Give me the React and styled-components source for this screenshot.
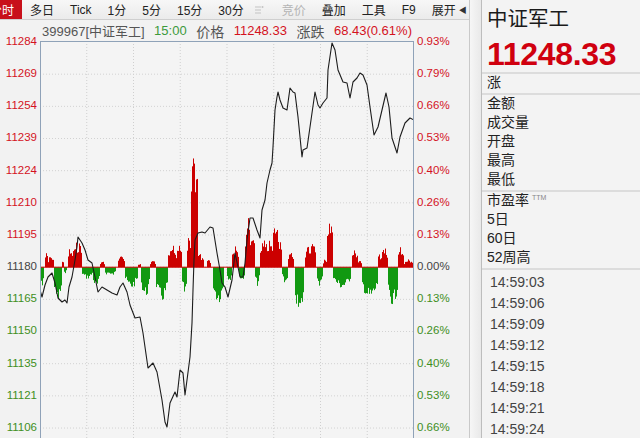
import React from 'react'
import styled, { createGlobalStyle } from 'styled-components'

const GlobalStyle = createGlobalStyle`
  html, body {
    margin: 0;
    padding: 0;
    background: #f2f2f2;
  }
  body {
    font-family: 'Liberation Sans', 'Noto Sans CJK SC', sans-serif;
  }
`

const RED = '#d4121e'
const GREEN = '#3f8f22'
const BAR_RED = '#cc0000'
const BAR_GREEN = '#119911'

// plot geometry, in page pixels
const PLOT_LEFT = 40
const PLOT_TOP = 41
const PLOT_RIGHT = 414
const ROW = 32.17
const BASE_Y = 42 + ROW * 7

const leftLabels = [
  '11284', '11269', '11254', '11239', '11224', '11210', '11195',
  '11180', '11165', '11150', '11135', '11121', '11106'
]
const rightLabels = [
  '0.93%', '0.79%', '0.66%', '0.53%', '0.40%', '0.26%', '0.13%',
  '0.00%', '0.13%', '0.26%', '0.40%', '0.53%', '0.66%'
]

const tabs = ['多日', 'Tick', '1分', '5分', '15分', '30分']
const times = ['14:59:03', '14:59:06', '14:59:09', '14:59:12', '14:59:15', '14:59:18', '14:59:21', '14:59:24']

// traced price line
const linePoints = [
  [40, 290], [42, 297], [45, 285], [48, 277], [52, 273], [55, 283], [58, 298],
  [62, 302], [65, 300], [67, 303], [69, 287], [72, 277], [75, 260], [77, 247],
  [78, 237], [82, 243], [85, 250], [88, 260], [92, 263], [95, 277], [98, 292],
  [102, 287], [107, 290], [112, 293], [117, 295], [120, 287], [123, 283],
  [127, 292], [130, 305], [135, 318], [140, 317], [143, 333], [148, 368],
  [153, 363], [157, 372], [162, 400], [165, 422], [167, 427], [170, 403],
  [175, 392], [177, 397], [180, 370], [183, 373], [185, 395], [187, 380],
  [190, 357], [192, 323], [193, 290], [194, 260], [195, 240], [198, 233],
  [202, 232], [205, 233], [210, 227], [213, 228], [217, 253], [220, 270],
  [222, 283], [225, 287], [228, 297], [232, 280], [235, 253], [238, 267],
  [240, 277], [243, 277], [245, 263], [247, 240], [250, 218], [253, 218],
  [257, 230], [260, 238], [262, 210], [265, 200], [267, 183], [270, 170],
  [272, 163], [273, 147], [275, 110], [277, 97], [278, 92], [280, 100],
  [283, 108], [287, 110], [290, 88], [293, 92], [295, 93], [298, 117],
  [302, 157], [303, 150], [307, 148], [310, 127], [315, 92], [318, 105],
  [320, 108], [323, 103], [327, 98], [328, 70], [332, 43], [335, 50],
  [338, 70], [343, 82], [347, 83], [350, 98], [353, 82], [357, 78],
  [360, 73], [363, 75], [367, 85], [370, 107], [374, 135], [378, 127],
  [382, 110], [386, 93], [389, 107], [392, 138], [397, 153], [400, 137],
  [405, 123], [410, 118], [414, 120]
]

// volume segments: [from x, to x, height] (+ red above, - green below)
const segments = [
  [41, 43, -22], [45, 47, 18], [48, 53, 12], [54, 61, -36], [62, 63, 8],
  [64, 66, -6], [68, 72, 20], [73, 77, 27], [78, 81, 30], [82, 92, -12],
  [93, 99, -22], [100, 104, 6], [105, 107, -9], [108, 115, -9], [118, 124, 11],
  [125, 137, -22], [138, 140, 4], [141, 149, -31], [150, 155, 7],
  [156, 167, -35], [168, 176, 24], [177, 181, 28], [182, 186, -27],
  [187, 190, 31], [191, 195, 114], [196, 197, 92], [198, 200, 20],
  [201, 203, 12], [207, 210, 9], [213, 223, -36], [227, 231, -14],
  [232, 238, 21], [239, 244, -14], [245, 250, 50], [251, 254, 41],
  [255, 259, -19], [260, 267, 30], [268, 272, 31], [273, 278, 54],
  [279, 281, 31], [282, 287, -17], [288, 293, 19], [295, 303, -50],
  [305, 310, 21], [311, 315, 33], [317, 322, -19], [323, 326, 8],
  [327, 332, 53], [333, 350, -22], [352, 357, 18], [358, 361, 9],
  [362, 377, -34], [378, 380, 16], [381, 387, 23], [388, 397, -39],
  [398, 403, 21], [404, 412, 8]
]

const buildBars = () => {
  let seed = 7
  const rand = () => {
    seed = (seed * 9301 + 49297) % 233280
    return seed / 233280
  }
  const bars = []
  segments.forEach(([x0, x1, h]) => {
    const n = x1 - x0 + 1
    for (let x = x0; x <= x1; x++) {
      const t = (x - x0 + 0.5) / n
      const shape = n > 2 ? 0.55 + 0.45 * Math.sin(Math.PI * t) : 1
      const k = Math.abs(h) > 80 ? 0.95 + 0.05 * rand() : 0.6 + 0.4 * rand()
      const len = Math.max(2, Math.abs(h) * shape * k)
      bars.push({ x, len, up: h > 0 })
    }
  })
  return bars
}

const bars = buildBars()

const Screen = styled.div`
  width: 640px;
  height: 438px;
  overflow: hidden;
  display: flex;
  background: #f2f2f2;
  color: #222;
`

const LeftPane = styled.div`
  width: 470px;
  flex-shrink: 0;
  display: flex;
  flex-direction: column;
  border-right: 1px solid #c9c9c9;
  box-sizing: border-box;
`

const TabBar = styled.div`
  height: 20px;
  flex-shrink: 0;
  display: flex;
  align-items: center;
  background: linear-gradient(#f7f7f7, #ebebeb);
  border-bottom: 1px solid #cfcfcf;
  box-sizing: border-box;
  font-size: 12px;
  overflow: hidden;
  white-space: nowrap;
`

const Tab = styled.div`
  height: 100%;
  display: flex;
  align-items: center;
  flex-shrink: 0;
  padding: ${(p) => (p.$active ? '0 8px 0 2px' : '0 8px')};
  margin-left: ${(p) => (p.$active ? '-12px' : '0')};
  background: ${(p) => (p.$active ? '#c8101a' : 'transparent')};
  color: ${(p) => (p.$active ? '#fff' : p.$muted ? '#b4b4b4' : '#222')};
`

const ToolIcon = styled.svg`
  width: 10px;
  height: 10px;
  flex-shrink: 0;
  margin: 0 10px 0 2px;
`

const Arrow = styled.span`
  font-size: 8px;
  color: #333;
  margin-left: -5px;
`

const ChartGrid = styled.div`
  flex: 1;
  min-height: 0;
  display: grid;
  grid-template-columns: 40px 374px 55px;
  grid-template-rows: 21px 1fr;
`

const Axis = styled.div`
  grid-row: 1 / span 2;
  grid-column: ${(p) => (p.$side === 'left' ? 1 : 3)};
  display: flex;
  flex-direction: column;
  padding-top: 5px;
  align-items: ${(p) => (p.$side === 'left' ? 'flex-end' : 'flex-start')};
  padding-right: ${(p) => (p.$side === 'left' ? '3px' : '0')};
  padding-left: ${(p) => (p.$side === 'right' ? '3px' : '0')};
  font-size: 11.5px;
`

const AxisLabel = styled.div`
  height: ${ROW}px;
  line-height: ${ROW}px;
  flex-shrink: 0;
  color: ${(p) => (p.$tone === 'up' ? RED : p.$tone === 'down' ? GREEN : '#444')};
`

const Header = styled.div`
  grid-row: 1;
  grid-column: 2;
  display: flex;
  align-items: center;
  gap: 9.5px;
  padding-left: 2px;
  font-size: 13px;
  white-space: nowrap;
  color: #555;
`

const HeadText = styled.span`
  color: ${(p) => p.$color || '#555'};
  font-size: ${(p) => (p.$cjk ? '14px' : '13px')};
`

const Plot = styled.div`
  grid-row: 2;
  grid-column: 2;
  border: 1px solid #8fa2b8;
  border-bottom: none;
  background: #f4f4f4;
  overflow: hidden;
`

const Gutter = styled.div`
  width: 11px;
  flex-shrink: 0;
  background: linear-gradient(90deg, #f6f6f6, #e9e9e9);
  border-right: 1px solid #bdbdbd;
`

const RightPanel = styled.div`
  flex: 1;
  display: flex;
  flex-direction: column;
  background: #f3f3f3;
  padding-left: 5px;
`

const Name = styled.div`
  height: 36px;
  line-height: 36px;
  font-size: 20.5px;
  color: #1a1a1a;
  padding-top: 1px;
  box-sizing: border-box;
`

const Price = styled.div`
  height: 36px;
  line-height: 36px;
  font-size: 32px;
  font-weight: bold;
  color: #d0000f;
  letter-spacing: -0.3px;
`

const Section = styled.div`
  border-top: 2px solid #dcdcdc;
  margin-left: -5px;
  padding-left: 5px;
`

const InfoRow = styled.div`
  height: 19px;
  line-height: 17px;
  font-size: 14px;
  color: #222;
`

const Ttm = styled.sup`
  font-size: 7px;
  line-height: 0;
  color: #888;
  margin-left: 3px;
  vertical-align: 5px;
`

const TimeList = styled.div`
  border-top: 2px solid #dcdcdc;
  margin-left: -5px;
  padding: 1.5px 0 0 8px;
`

const TimeRow = styled.div`
  height: 21.1px;
  line-height: 21px;
  font-size: 14px;
  color: #444;
`

const toneOf = (i) => (i < 7 ? 'up' : i === 7 ? 'flat' : 'down')

const PriceChart = () => {
  const h = 440 - PLOT_TOP
  const w = PLOT_RIGHT - PLOT_LEFT - 1
  const vx = [1, 2, 3, 4, 5, 6, 7].map((k) => PLOT_LEFT + k * 46.75)
  const hy = leftLabels.map((_, i) => 42 + i * ROW).slice(1)
  const path = linePoints.map(([x, y], i) => `${i ? 'L' : 'M'}${x} ${y}`).join(' ')
  return (
    <svg width={w} height={h} viewBox={`${PLOT_LEFT + 1} ${PLOT_TOP + 1} ${w} ${h}`} style={{ display: 'block' }}>
      {vx.map((x) => (
        <line key={x} x1={x} x2={x} y1={PLOT_TOP} y2={440} stroke="#cfcfcf" strokeDasharray="1 2" />
      ))}
      {hy.map((y) => (
        <line key={y} x1={PLOT_LEFT} x2={PLOT_RIGHT} y1={y} y2={y} stroke="#d2d2d2" strokeDasharray="1 2" />
      ))}
      {bars.map((b) => (
        <rect
          key={b.x}
          x={b.x}
          width={1}
          y={b.up ? BASE_Y - b.len : BASE_Y}
          height={b.len}
          fill={b.up ? BAR_RED : BAR_GREEN}
        />
      ))}
      <line x1={PLOT_LEFT} x2={PLOT_RIGHT} y1={BASE_Y} y2={BASE_Y} stroke={BAR_RED} strokeWidth="1" />
      <path d={path} fill="none" stroke="#1c1c1c" strokeWidth="1.1" strokeLinejoin="round" />
    </svg>
  )
}

export default function App() {
  return (
    <Screen>
      <GlobalStyle />
      <LeftPane>
        <TabBar>
          <Tab $active>分时</Tab>
          {tabs.map((t) => (
            <Tab key={t}>{t}</Tab>
          ))}
          <ToolIcon viewBox="0 0 10 10">
            <path d="M1 2h6M1 5h6M1 8h6" stroke="#c4c4c4" strokeWidth="1.2" />
            <circle cx="8.5" cy="2" r="1" fill="#c4c4c4" />
          </ToolIcon>
          <Tab $muted>竞价</Tab>
          <Tab>叠加</Tab>
          <Tab>工具</Tab>
          <Tab>F9</Tab>
          <Tab>展开</Tab>
          <Arrow>◀</Arrow>
        </TabBar>
        <ChartGrid>
          <Axis $side="left">
            {leftLabels.map((l, i) => (
              <AxisLabel key={i} $tone={toneOf(i)}>{l}</AxisLabel>
            ))}
          </Axis>
          <Header>
            <HeadText>399967[中证军工]</HeadText>
            <HeadText $color="#3c9a3c">15:00</HeadText>
            <HeadText $cjk>价格</HeadText>
            <HeadText $color={RED}>11248.33</HeadText>
            <HeadText $cjk>涨跌</HeadText>
            <HeadText $color={RED}>68.43(0.61%)</HeadText>
          </Header>
          <Axis $side="right">
            {rightLabels.map((l, i) => (
              <AxisLabel key={i} $tone={toneOf(i)}>{l}</AxisLabel>
            ))}
          </Axis>
          <Plot>
            <PriceChart />
          </Plot>
        </ChartGrid>
      </LeftPane>
      <Gutter />
      <RightPanel>
        <Name>中证军工</Name>
        <Price>11248.33</Price>
        <Section>
          <InfoRow>涨</InfoRow>
        </Section>
        <Section>
          {['金额', '成交量', '开盘', '最高', '最低'].map((r) => (
            <InfoRow key={r}>{r}</InfoRow>
          ))}
        </Section>
        <Section>
          <InfoRow>
            市盈率<Ttm>TTM</Ttm>
          </InfoRow>
          {['5日', '60日', '52周高'].map((r) => (
            <InfoRow key={r}>{r}</InfoRow>
          ))}
        </Section>
        <TimeList>
          {times.map((t) => (
            <TimeRow key={t}>{t}</TimeRow>
          ))}
        </TimeList>
      </RightPanel>
    </Screen>
  )
}
